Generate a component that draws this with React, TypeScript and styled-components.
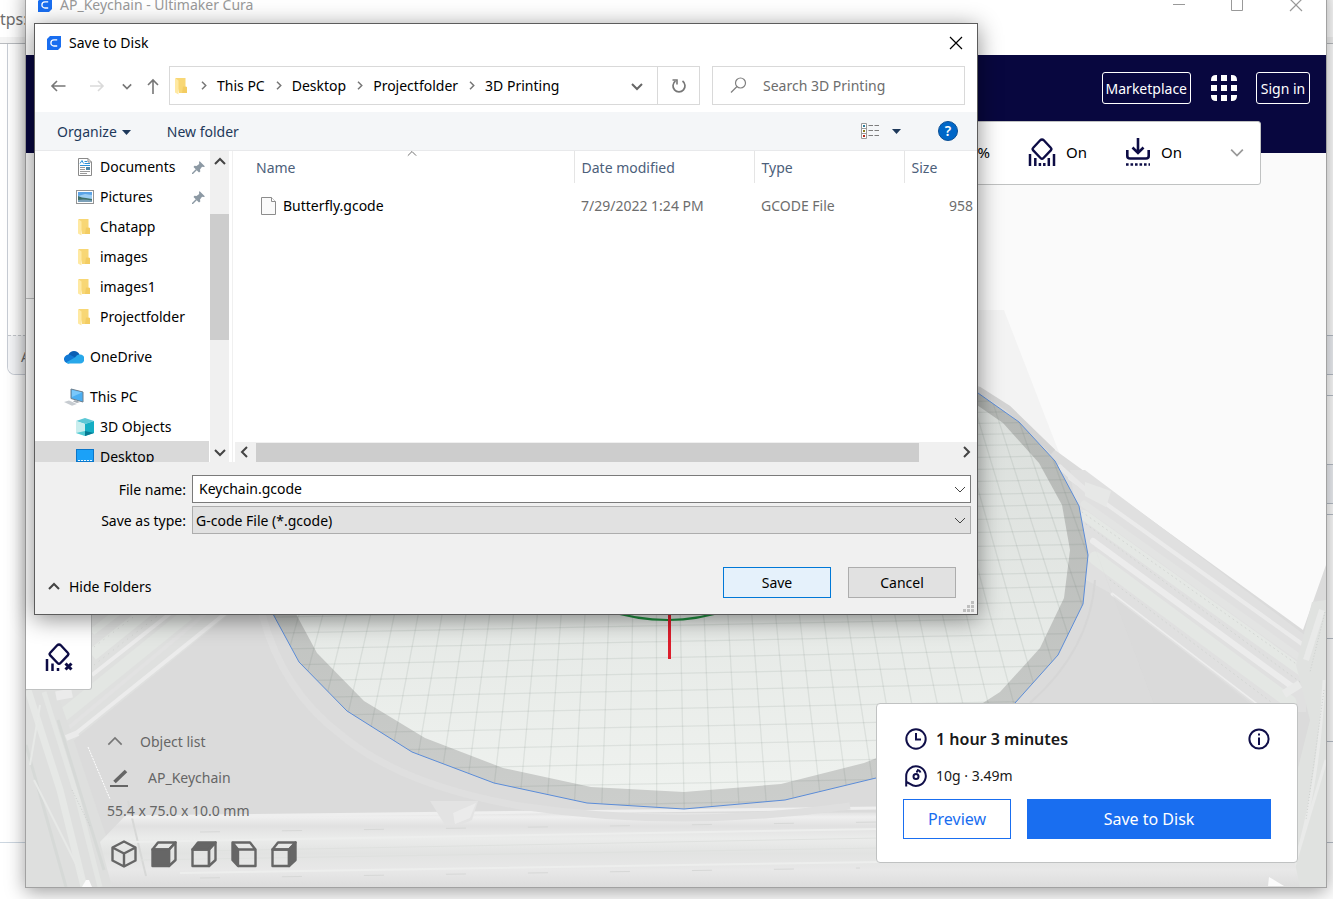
import React from "react";
import styled, { createGlobalStyle } from "styled-components";

const Global = createGlobalStyle`
  * { box-sizing: border-box; }
  html, body, #root { height: 100%; }
  body { margin: 0; overflow: hidden; background: #fff; font-family: "Noto Sans", "Open Sans", sans-serif; font-size: 14px; line-height: 20px; color: #000; }
  button, input, select { font: inherit; color: inherit; margin: 0; }
  button { background: none; border: 0; padding: 0; display: flex; align-items: center; justify-content: center; }
  svg { display: block; flex: none; }
`;

/* ---------- browser page behind the windows ---------- */

const Desktop = styled.main`
  position: relative;
  min-height: 100vh;
  overflow: hidden;
  background: #fff;
`;
const BrowserPage = styled.div`
  display: flex;
  flex-direction: column;
  min-height: 100vh;
  color: #6d6d6d;
`;
const AddressBar = styled.div`
  height: 44px;
  padding-top: 9px;
  border-bottom: 1px solid #b9bcc0;
  font-size: 16px;
  box-shadow: inset 0 -6px 0 #f4f4f4;
`;
const PageBody = styled.div`
  display: flex;
  align-items: flex-start;
  justify-content: space-between;
`;
const PostCard = styled.div`
  width: 300px;
  margin-left: 7px;
  border: 1px solid #c9ced6;
  border-top: 0;
  border-radius: 0 0 8px 8px;
`;
const PostBody = styled.div`
  height: 291px;
`;
const PostFooter = styled.div`
  height: 39px;
  padding: 11px 13px;
  border-top: 1px dashed #c4c7cc;
  background: #f5f6f8;
  border-radius: 0 0 8px 8px;
`;
const SideCells = styled.div`
  width: 60px;
`;
const SideCell = styled.div<{ $h: number; $tint?: boolean }>`
  height: ${(p) => p.$h}px;
  border-bottom: 1px solid #b8bfc8;
  background: ${(p) => (p.$tint ? "#f1f3f7" : "transparent")};
`;
const PageRule = styled.hr`
  width: 60px;
  margin: -1px 0 0;
  border: 0;
  border-top: 1px solid #ccd6e0;
`;

/* ---------- slicer window ---------- */

const CuraWindow = styled.section`
  position: absolute;
  top: -14px;
  right: 6px;
  bottom: 11px;
  left: 25px;
  display: flex;
  flex-direction: column;
  border: 1px solid #a2a2a2;
  background: #fff;
  box-shadow: 0 4px 18px rgba(0, 0, 0, 0.38);
`;
const CuraTitle = styled.header`
  display: flex;
  align-items: center;
  height: 36px;
  padding: 0 23px 0 12px;
  color: #999;
`;
const TitleText = styled.span`
  flex: 1;
  margin-left: 8px;
`;
const WindowButtons = styled.div`
  display: flex;
  gap: 46px;
`;
const MenuStrip = styled.div`
  height: 32px;
`;
const NavBar = styled.nav`
  display: flex;
  align-items: flex-start;
  justify-content: flex-end;
  height: 98px;
  padding: 17px 16px 0;
  background: #08073f;
  color: #fff;
`;
const NavButton = styled.button`
  min-width: 54px;
  height: 32px;
  padding: 1px 3px 0;
  border: 1px solid #fff;
  border-radius: 3px;
`;
const AppsButton = styled.button`
  height: 32px;
  margin: 0 19px 0 20px;
`;
const Stage = styled.div`
  position: relative;
  flex: 1;
  display: flex;
  flex-direction: column;
  background: #fafafa;
`;
const Scene = styled.svg`
  position: absolute;
  inset: 0;
  width: 100%;
  height: 100%;
`;
const SettingsPanel = styled.div`
  position: absolute;
  top: -32px;
  right: 65px;
  left: 560px;
  display: flex;
  align-items: center;
  justify-content: flex-end;
  height: 64px;
  padding: 0 16px 2px 0;
  border: 1px solid #c0c2c2;
  border-radius: 3px;
  background: #fff;
  font-size: 15px;
`;
const Setting = styled.span`
  display: flex;
  align-items: center;
  gap: 10px;
  margin-right: 38px;
  &:last-of-type { margin-right: 48px; }
`;
const ToolPanel = styled.aside`
  position: relative;
  display: flex;
  align-items: flex-end;
  width: 66px;
  min-height: 392px;
  margin-top: 145px;
  padding: 0 0 18px 19px;
  border: 1px solid #c0c2c2;
  border-left: 0;
  border-radius: 0 3px 3px 0;
  background: #fff;
`;
const StageFoot = styled.div`
  position: relative;
  display: flex;
  justify-content: space-between;
  align-items: flex-end;
  margin-top: auto;
  padding: 0 28px 19px 81px;
`;
const ObjectInfo = styled.div`
  display: flex;
  flex-direction: column;
  color: #666;
`;
const InfoRow = styled.div<{ $gap: number }>`
  display: flex;
  align-items: center;
  gap: ${(p) => p.$gap}px;
  height: 36px;
`;
const InfoText = styled.div`
  height: 30px;
  padding-top: 5px;
`;
const ViewButtons = styled.div`
  display: flex;
  gap: 14px;
  padding: 14px 0 0 4px;
`;
const ActionPanel = styled.section`
  display: flex;
  flex-direction: column;
  width: 422px;
  margin-bottom: 5px;
  padding: 21px 26px 23px;
  border: 1px solid #c0c2c2;
  border-radius: 4px;
  background: #fff;
  color: #191919;
`;
const ActionRow = styled.div`
  display: flex;
  align-items: center;
  height: 28px;
  gap: 9px;
  margin-bottom: 9px;
  padding: 0 1px 0 2px;
`;
const Duration = styled.strong`
  flex: 1;
  font-size: 16px;
  font-weight: 600;
`;
const ActionButtons = styled.div`
  display: grid;
  grid-template-columns: 108px 1fr;
  gap: 16px;
`;
const ActionButton = styled.button<{ $primary?: boolean }>`
  height: 40px;
  border: 1px solid #196ef0;
  background: ${(p) => (p.$primary ? "#196ef0" : "#fff")};
  color: ${(p) => (p.$primary ? "#fff" : "#196ef0")};
  font-size: 16px;
`;

/* ---------- save dialog ---------- */

const Dialog = styled.section`
  position: absolute;
  top: 23px;
  left: 34px;
  right: 355px;
  min-width: 720px;
  border: 1px solid #5c5c5c;
  background: #fff;
  box-shadow: 0 4px 22px rgba(0, 0, 0, 0.45);
`;
const DialogTitle = styled.header`
  display: flex;
  align-items: center;
  height: 38px;
  padding: 0 14px 0 12px;
`;
const Navigation = styled.div`
  display: flex;
  align-items: center;
  height: 50px;
  padding: 4px 12px 7px 15px;
`;
const Arrows = styled.div`
  display: grid;
  grid-template-columns: 39px 33px 23px 16px;
  align-items: center;
  justify-items: start;
  margin-right: 8px;
`;
const PathBox = styled.div`
  display: flex;
  align-items: center;
  flex: 1;
  height: 39px;
  border: 1px solid #d9d9d9;
  padding-left: 3px;
`;
const Crumbs = styled.ol`
  display: flex;
  flex: 1;
  margin: 0;
  padding: 0 0 0 8px;
  list-style: none;
`;
const Crumb = styled.li`
  display: flex;
  align-items: center;
  gap: 9px;
  margin-right: 9px;
`;
const RefreshButton = styled.button`
  align-self: stretch;
  width: 42px;
  margin-left: 14px;
  border-left: 1px solid #d9d9d9;
`;
const SearchBox = styled.label`
  display: flex;
  align-items: center;
  gap: 16px;
  width: 253px;
  height: 39px;
  margin-left: 12px;
  padding-left: 17px;
  border: 1px solid #d9d9d9;
`;
const SearchInput = styled.input`
  width: 180px;
  border: 0;
  padding: 0;
  outline: 0;
  background: none;
  &::placeholder { color: #6d6d6d; opacity: 1; }
`;
const Toolbar = styled.div`
  display: flex;
  align-items: center;
  height: 39px;
  padding: 0 19px 0 22px;
  border-bottom: 1px solid #e8e9eb;
  background: #f4f6f8;
  color: #1e395b;
`;
const ToolbarButton = styled.button<{ $view?: boolean }>`
  gap: ${(p) => (p.$view ? 13 : 5)}px;
  margin-right: ${(p) => (p.$view ? 37 : 36)}px;
  padding-top: ${(p) => (p.$view ? 0 : 2)}px;
`;
const Spacer = styled.div`
  flex: 1;
`;
const Browser = styled.div`
  display: flex;
  height: 311px;
`;
const Tree = styled.ul`
  width: 174px;
  margin: 0;
  padding: 0;
  overflow: hidden;
  list-style: none;
`;
const TreeItem = styled.li<{ $top?: boolean; $space?: boolean; $selected?: boolean }>`
  display: flex;
  align-items: center;
  height: 30px;
  margin-top: ${(p) => (p.$space ? 10 : 0)}px;
  padding: 2px 4px 0 ${(p) => (p.$top ? 29 : 41)}px;
  background: ${(p) => (p.$selected ? "#d9d9d9" : "transparent")};
`;
const TreeLabel = styled.span`
  flex: 1;
  margin-left: 6px;
`;
const VScroll = styled.div`
  display: flex;
  flex-direction: column;
  align-items: center;
  width: 19px;
  margin: 0 1px;
  padding: 5px 0 4px;
  background: #f0f0f0;
`;
const VThumb = styled.div`
  width: 19px;
  height: 126px;
  margin: 46px 0 auto;
  background: #cdcdcd;
`;
const FilePane = styled.div`
  display: flex;
  flex: 1;
  flex-direction: column;
  min-width: 0;
  margin-left: 2px;
  border-left: 1px solid #f0f0f0;
`;
const FileArea = styled.div`
  position: relative;
  flex: 1;
  padding-left: 2px;
`;
const SortMark = styled.span`
  position: absolute;
  top: -2px;
  left: 174px;
`;
const FileTable = styled.table`
  width: 100%;
  table-layout: fixed;
  border-collapse: collapse;
`;
const HeadCell = styled.th<{ $w?: number }>`
  width: ${(p) => (p.$w ? p.$w + "px" : "auto")};
  height: 32px;
  padding: 2px 0 0 7px;
  border-right: 1px solid #e5e5e5;
  color: #4c607a;
  font-weight: 400;
  text-align: left;
  &:first-child { padding-left: 21px; }
  &:last-child { border-right: 0; }
`;
const Cell = styled.td`
  height: 44px;
  padding: 2px 0 0 7px;
  color: #6d6d6d;
  white-space: nowrap;
  &:first-child { padding-left: 26px; color: #000; }
  &:last-child { padding-right: 4px; text-align: right; }
`;
const FileName = styled.span`
  display: flex;
  align-items: center;
  gap: 7px;
`;
const HScroll = styled.div`
  display: flex;
  align-items: center;
  height: 20px;
  margin-left: 2px;
  padding: 0 5px 0 4px;
  background: #f0f0f0;
`;
const HThumb = styled.div`
  flex: 1;
  height: 19px;
  margin: 0 41px 0 5px;
  background: #cdcdcd;
`;
const Footer = styled.div`
  padding: 13px 6px 0 13px;
  background: #f0f0f0;
`;
const Field = styled.div`
  display: grid;
  grid-template-columns: 138px 1fr;
  gap: 6px;
  align-items: center;
  margin-bottom: 3px;
`;
const FieldLabel = styled.label`
  padding-top: 2px;
  text-align: right;
`;
const Combo = styled.div<{ $muted?: boolean }>`
  display: flex;
  align-items: center;
  height: 28px;
  padding: 0 4px 0 ${(p) => (p.$muted ? 3 : 6)}px;
  border: 1px solid ${(p) => (p.$muted ? "#adadad" : "#7a7a7a")};
  background: ${(p) => (p.$muted ? "#e1e1e1" : "#fff")};
`;
const ComboInput = styled.input`
  flex: 1;
  padding: 0;
  border: 0;
  outline: 0;
  background: none;
`;
const ComboSelect = styled.select`
  flex: 1;
  padding: 1px 0 0;
  border: 0;
  outline: 0;
  appearance: none;
  background: none;
`;
const FooterActions = styled.div`
  display: flex;
  align-items: center;
  gap: 17px;
  padding: 30px 15px 3px 0;
`;
const HideFolders = styled.button`
  gap: 9px;
  margin: 8px auto 0 0;
`;
const DialogButton = styled.button<{ $default?: boolean }>`
  width: 108px;
  height: 31px;
  border: 1px solid ${(p) => (p.$default ? "#0078d7" : "#adadad")};
  background: ${(p) => (p.$default ? "#e5f1fb" : "#e1e1e1")};
`;
const GripRow = styled.div`
  display: flex;
  justify-content: flex-end;
  height: 13px;
  margin-right: -3px;
`;

/* ---------- icons ---------- */

const Logo = () => (
  <svg width="14" height="14" viewBox="0 0 14 14">
    <path d="M3 0H14V11L11 14H0V3Z" fill="#196ef0" />
    <path d="M10.2 3.8H7A3.100 3.100 0 0 0 7 10H10.2" fill="none" stroke="#fff" strokeWidth="1.300" />
  </svg>
);

const chevrons = {
  up: "M1 8L6 3L11 8",
  down: "M1 4L6 9L11 4",
  left: "M8 1L3 6L8 11",
  right: "M4 1L9 6L4 11",
};
const Chevron = ({ dir, size = 12, color = "#444", w = 1.5 }: { dir: keyof typeof chevrons; size?: number; color?: string; w?: number }) => (
  <svg width={size} height={size} viewBox="0 0 12 12">
    <path d={chevrons[dir]} fill="none" stroke={color} strokeWidth={w} />
  </svg>
);
const Cross = ({ color }: { color: string }) => (
  <svg width="14" height="14" viewBox="0 0 14 14"><path d="M1 1L13 13M13 1L1 13" stroke={color} strokeWidth="1.2" /></svg>
);
const NavArrow = ({ kind }: { kind: "back" | "forward" | "up" }) => (
  <svg width="16" height="16" viewBox="0 0 16 16">
    <path
      d={kind === "back" ? "M7 3L2 8L7 13M2 8H15.500" : kind === "forward" ? "M9 3L14 8L9 13M14 8H1" : "M3 7L8 2L13 7M8 2V16"}
      fill="none"
      stroke={kind === "forward" ? "#dadada" : "#777"}
      strokeWidth="1.6"
    />
  </svg>
);
const Caret = () => (
  <svg width="9" height="5" viewBox="0 0 9 5"><path d="M0 0H9L4.500 5Z" fill="#1e395b" /></svg>
);
const Folder = () => (
  <svg width="18" height="18" viewBox="0 0 18 18">
    <path d="M2.500 1H12.500V9.500L14 10V16H6Z" fill="#f8d775" />
    <path d="M10 9.500L14 10V16H9Z" fill="#f3cc62" />
    <path d="M2 1L5.500 3.500V17.500L2 15.500Z" fill="#ffe9a2" />
  </svg>
);
const DocumentIcon = () => (
  <svg width="18" height="18" viewBox="0 0 18 18">
    <path d="M2.500 .5H12L15.500 4V17.500H2.500Z" fill="#fff" stroke="#8a8a8a" />
    <path d="M12 .5V4H15.500" fill="none" stroke="#8a8a8a" />
    <path d="M4 5.500L6 2.500L7.500 5.500M8.500 3.500H11M8.500 5.500H14M4 7.500H14" fill="none" stroke="#2a8fd8" />
    <path d="M4 9.500H9M4 11.500H9M4 13.500H14M4 15.500H11" stroke="#9a9a9a" />
    <rect x="10" y="9" width="4" height="3" fill="#4d86a8" />
  </svg>
);
const PictureIcon = () => (
  <svg width="18" height="14" viewBox="0 0 18 14">
    <rect x=".5" y=".5" width="17" height="13" fill="#fff" stroke="#949494" />
    <rect x="2" y="2" width="14" height="10" fill="#9ccdf3" />
    <path d="M2 2H16V5L9 4L2 6Z" fill="#5ba3e6" />
    <path d="M2 6Q6 8 10 8L16 9V12H2Z" fill="#3f6f68" />
    <path d="M2 10Q8 9 16 10.500V12H2Z" fill="#7ba0b8" />
  </svg>
);
const Cloud = () => (
  <svg width="20" height="14" viewBox="0 0 20 14">
    <path d="M4.500 4.500A6 6 0 0 1 15.500 4.500L12 9L4 8Z" fill="#0a5fb4" />
    <path d="M4 13.500A4.500 4.500 0 1 1 6.500 5L12 8L5 13.500Z" fill="#1178d4" />
    <path d="M11 7.500Q13 4 16 4.500A4.500 4.500 0 0 1 16 13.500H4L2 12.500Z" fill="#28a8ea" />
  </svg>
);
const Computer = () => (
  <svg width="20" height="18" viewBox="0 0 20 18">
    <path d="M7 1L19 4V14L7 10.500Z" fill="#4aaef2" stroke="#6e7f8c" />
    <path d="M8 2L18 4.500L8 9Z" fill="#79c8fb" />
    <path d="M11 12L16 14L13 15L9 13.500Z" fill="#a9afb5" />
    <path d="M0 14L5 12.500L13 16L8 17.800Z" fill="#c7ccd1" />
  </svg>
);
const Cube3D = () => (
  <svg width="18" height="18" viewBox="0 0 18 18">
    <path d="M0 3L9 0L18 3L9 6Z" fill="#5cc8d6" />
    <path d="M0 3L9 6V18L0 15Z" fill="#c9eeee" />
    <path d="M18 3L9 6V18L18 15Z" fill="#14aec4" />
    <path d="M9 13L18 15L9 18Z" fill="#067a92" />
    <path d="M9 13L0 15L9 18Z" fill="#50cbd4" />
  </svg>
);
const Monitor = () => (
  <svg width="18" height="16" viewBox="0 0 18 16">
    <rect x=".5" y=".5" width="17" height="12" fill="#1ba1f8" stroke="#0b76c9" />
    <path d="M2 11.500H16" stroke="#e6f5ff" strokeDasharray="2 1" />
    <path d="M5 15H13" stroke="#0b76c9" strokeWidth="2" />
  </svg>
);
const Pin = () => (
  <svg width="13" height="13" viewBox="0 0 13 13">
    <path d="M7.500 0L13 5.500L11.500 6L10 5.800L8 8.500L8.300 10.500L7 11.500L1.500 6L2.500 4.800L4.500 5L7.200 3L7 1.500Z" fill="#8c99a4" />
    <path d="M4.500 8.500L0 13" stroke="#8c99a4" strokeWidth="1.4" />
  </svg>
);
const BlankFile = () => (
  <svg width="15" height="18" viewBox="0 0 15 18">
    <path d="M.5 .5H10.500L14.500 4.500V17.500H.5Z" fill="#fafafa" stroke="#8c8c8c" />
    <path d="M10.500 .5V4.500H14.500" fill="#fff" stroke="#8c8c8c" />
  </svg>
);
const Refresh = () => (
  <svg width="16" height="16" viewBox="0 0 16 16">
    <path d="M11.500 3A6 6 0 1 1 4.500 3" fill="none" stroke="#777" strokeWidth="1.700" />
    <path d="M1.500 2H6V6.500" fill="none" stroke="#777" strokeWidth="1.600" />
  </svg>
);
const Magnifier = () => (
  <svg width="17" height="17" viewBox="0 0 17 17">
    <circle cx="10.500" cy="6" r="5" fill="none" stroke="#808080" strokeWidth="1.200" />
    <path d="M7 9.500L1 15.500" stroke="#808080" strokeWidth="1.200" />
  </svg>
);
const ListIcon = () => (
  <svg width="18" height="16" viewBox="0 0 18 16">
    <path d="M.5 .5H5.500V15.500H.5ZM.5 5.500H5.500M.5 10.500H5.500" fill="#fff" stroke="#9a9a9a" />
    <path d="M2 3H4" stroke="#2f7d9a" strokeWidth="2" />
    <path d="M2 8H4" stroke="#8a7a1c" strokeWidth="2" />
    <path d="M2 13H4" stroke="#b32a1c" strokeWidth="2" />
    <path d="M7.500 2.500H12M13.500 2.500H18M7.500 7.500H12M13.500 7.500H18M7.500 12.500H12M13.500 12.500H18" stroke="#7d7d7d" />
  </svg>
);
const Help = styled.button`
  width: 20px;
  height: 20px;
  border: 1px solid #0b4f94;
  border-radius: 50%;
  background: #0067c8;
  color: #fff;
  font-weight: 600;
`;
const Grip = () => (
  <svg width="11" height="11" viewBox="0 0 11 11" fill="#bfbfbf">
    {[[8, 0], [4, 4], [8, 4], [0, 8], [4, 8], [8, 8]].map(([x, y]) => <rect key={`${x}-${y}`} x={x} y={y} width="3" height="3" />)}
  </svg>
);
const Apps = () => (
  <svg width="26" height="26" viewBox="0 0 26 26" fill="#fff">
    <path d="M6 0V6H0V5Q0 0 5 0ZM10 0H16V6H10ZM20 0H21Q26 0 26 5V6H20ZM0 10H6V16H0ZM10 10H16V16H10ZM20 10H26V16H20ZM0 20H6V26H5Q0 26 0 21ZM10 20H16V26H10ZM20 20H26V21Q26 26 21 26H20Z" />
  </svg>
);
const SupportIcon = ({ blocked }: { blocked?: boolean }) => (
  <svg width="28" height="28" viewBox="0 0 28 28" fill="none" stroke="#0d0c45">
    <path d="M14 1.500Q15 1.500 15.800 2.300L23 10Q24 11 23 12.200L15.500 20Q14 21.500 12.500 20L5 12.200Q4 11 5 10L12.200 2.300Q13 1.500 14 1.500Z" strokeWidth="2.400" />
    <path d={blocked ? "M2 16V28M7.500 20.500V28M13 25V28" : "M2 16V28M7.300 20V28M11.900 25V28M16.300 25V28M20.800 20V28M26 16V28"} strokeWidth="2.500" />
    {blocked && <path d="M20.500 20.500L26.500 26.500M26.500 20.500L20.500 26.500" strokeWidth="3" />}
  </svg>
);
const AdhesionIcon = () => (
  <svg width="26" height="28" viewBox="0 0 26 28" fill="none" stroke="#0d0c45" strokeWidth="2.600">
    <path d="M13 0V14.500M7.500 9.500L13 15L18.500 9.500" />
    <path d="M2.300 12V18Q2.300 20.500 5 20.500H21Q23.700 20.500 23.700 18V12" />
    <path d="M1 26.500H25" strokeDasharray="2.600 1.900" />
  </svg>
);
const Clock = () => (
  <svg width="22" height="22" viewBox="0 0 22 22" fill="none" stroke="#100f49" strokeWidth="2">
    <circle cx="11" cy="11" r="9.700" />
    <path d="M11 5V11.500H16" />
  </svg>
);
const Spool = () => (
  <svg width="22" height="22" viewBox="0 0 22 22" fill="none" stroke="#100f49" strokeWidth="2">
    <path d="M1.200 21.500V11A9.800 9.800 0 1 1 5.500 19.200L1.500 17" />
    <circle cx="11" cy="11.500" r="2.500" />
    <path d="M11 6.500H13M12 5Q14.500 5 15.500 7.500" />
  </svg>
);
const Info = () => (
  <svg width="22" height="22" viewBox="0 0 22 22" fill="none" stroke="#100f49" strokeWidth="2">
    <circle cx="11" cy="11" r="9.600" />
    <path d="M11 9.500V17M11 5.500V7.500" />
  </svg>
);
const Pencil = () => (
  <svg width="21" height="18" viewBox="0 0 21 18" fill="none" stroke="#666">
    <path d="M7.500 13L19 2" strokeWidth="3.600" />
    <path d="M3 17H21" strokeWidth="2" />
  </svg>
);
type Face = "iso" | "front" | "top" | "left" | "right";
const ViewCube = ({ face }: { face: Face }) => (
  <svg width="26" height="28" viewBox="0 0 26 28" fill="none" stroke="#666" strokeWidth="2.400" strokeLinejoin="round">
    {face === "iso" ? (
      <path d="M13 1.500L24.500 7.500V20.500L13 26.500L1.500 20.500V7.500ZM1.500 7.500L13 13.500L24.500 7.500M13 13.500V26" />
    ) : face === "left" ? (
      <>
        <path d="M1.500 2.500L7 9.500V26L1.500 20Z" fill="#666" />
        <path d="M1.500 2.500H19L24.500 9.500V26H7M7 9.500H24.500" />
      </>
    ) : (
      <>
        <path d="M1.500 9.500L7 2.500H24.500L18 9.500Z" fill={face === "top" ? "#666" : "none"} />
        <path d="M1.500 9.500H18V26H1.500Z" fill={face === "front" ? "#666" : "none"} />
        <path d="M24.500 2.500V20L18 26V9.500Z" fill={face === "right" ? "#666" : "none"} />
      </>
    )}
  </svg>
);

/* ---------- 3D scene ---------- */

const rimOuter = "978,393 1019,422 1055,461 1079,506 1088,555 1083,604 1058,655 1015,703 955,748 876,778 785,800 684,809 587,803 494,783 412,752 347,711 299,662 273,614 260,555 300,450 450,360 700,340";
const rimInner = "977,405 1003,423 1039,463 1062,505 1070,550 1064,598 1040,648 1000,692 930,737 864,763 781,784 684,792 591,787 503,768 425,738 364,701 317,653 296,614 290,555 330,460 460,375 700,355";
const rows = [401, 412, 423, 434, 445, 457, 469, 481, 494, 506, 519, 532, 546, 560, 574, 588, 603, 619, 635, 651, 667, 684, 702, 720, 738, 757, 777, 797];
const columns = Array.from({ length: 37 }, (_, i) => i - 18);
const gridX = (k: number, y: number) => 681 + 0.02 * (y - 650) + k * (24.5 + 0.019 * (y - 650));

const BuildScene = () => (
  <Scene viewBox="26 153 1300 734" preserveAspectRatio="xMidYMid slice" aria-hidden="true">
    <defs>
      <linearGradient id="plate" x1="0" y1="0" x2="0" y2="1">
        <stop offset="0.1" stopColor="#dadedb" />
        <stop offset="1" stopColor="#eff2ef" />
      </linearGradient>
      <linearGradient id="rim" x1="0" y1="0" x2="0" y2="1">
        <stop offset="0.1" stopColor="#b4b7b4" />
        <stop offset="1" stopColor="#cccecc" />
      </linearGradient>
      <linearGradient id="beam" x1="0" y1="0" x2="0" y2="1">
        <stop offset="0" stopColor="#dedede" />
        <stop offset="0.08" stopColor="#efefef" />
        <stop offset="0.2" stopColor="#e1e1e1" />
        <stop offset="0.36" stopColor="#ebeceb" />
        <stop offset="0.55" stopColor="#e2e3e2" />
        <stop offset="0.78" stopColor="#e8e8e8" />
        <stop offset="1" stopColor="#dddddd" />
      </linearGradient>
      <clipPath id="bed"><polygon points={rimOuter} /></clipPath>
    </defs>
    <polygon points="700,310 1004,310 1060,455 978,455" fill="#f3f3f3" />
    <polygon points="26,300 900,340 978,386 1009,407 1055,450 1303,630 1326,565 1326,887 26,887" fill="#dbdbdb" />
    <polygon points="1070,470 1085,470 1306,636 1306,712 1260,712 1112,594 1086,580" fill="#e0e0e0" />
    <g fill="none" strokeLinecap="round">
      <path d="M1070 478L1302 644" stroke="#ebebeb" strokeWidth="4" />
      <path d="M1084 504L1303 660" stroke="#e3e4e3" strokeWidth="7" />
      <path d="M1084 515L1303 672" stroke="#e5e8e5" strokeWidth="10" />
      <path d="M1093 541L1294 688" stroke="#ececec" strokeWidth="6" />
      <path d="M1095 558L1290 702" stroke="#e4e7e4" strokeWidth="13" />
      <path d="M1112 594L1260 707" stroke="#eeeeee" strokeWidth="3" />
      <path d="M1082 512L1302 668M1086 524L1300 682M1110 580L1275 705" stroke="#d3d6d3" strokeDasharray="1 4" />
      <path d="M1060 467L1090 494" stroke="#e8e8e8" strokeWidth="5" />
    </g>
    <polygon points="1085,482 1111,491 1106,507 1085,496" fill="#e7e8e7" />
    <polygon points="1090,535 1154,704 1256,704 1112,594" fill="#d8d8d8" opacity="0.6" />
    <polygon points="1326,600 1312,602 1296,665 1310,720 1290,800 1284,887 1326,887" fill="#e0e2e0" />
    <g fill="none" stroke="#e9eae9">
      <path d="M1322 610L1306 660" strokeWidth="6" />
      <path d="M1324 680Q1318 800 1288 884M1326 760L1290 880" strokeWidth="3" />
      <path d="M1284 694L1300 684" strokeWidth="8" />
    </g>
    <path d="M1325 612L1310 672M1324 690L1306 820" fill="none" stroke="#cdd0ce" strokeDasharray="1 2" />

    <polygon points="92,612 232,612 74,740 60,760 26,780 26,690 92,690" fill="#dfe0df" />
    <g fill="none">
      <path d="M92 632L118 612" stroke="#e4e7e4" strokeWidth="7" />
      <path d="M92 655L148 610" stroke="#e5e8e5" strokeWidth="12" />
      <path d="M92 675L172 612" stroke="#ececec" strokeWidth="4" />
      <path d="M62 716L188 614" stroke="#e3e6e3" strokeWidth="13" />
      <path d="M60 735L205 614" stroke="#e2e2e2" strokeWidth="4" />
      <path d="M70 738L227 612" stroke="#ececec" strokeWidth="4" />
      <path d="M94 647L140 612M94 665L160 614" stroke="#d0d3d0" strokeDasharray="1 5" />
    </g>
    <polygon points="26,690 56,690 72,735 104,830 126,887 26,887" fill="#dedfde" />
    <g fill="none">
      <path d="M28 690L60 790L84 887" stroke="#e6e8e6" strokeWidth="7" />
      <path d="M44 692L78 800L100 887" stroke="#e4e6e4" strokeWidth="5" />
      <path d="M26 745L66 887M58 720L104 870" stroke="#d6d9d7" strokeWidth="3" />
      <path d="M56 696L72 693" stroke="#ebebeb" strokeWidth="9" />
      <path d="M66 738L78 733" stroke="#ebebeb" strokeWidth="6" />
      <path d="M30 765L40 705M34 780L84 880" stroke="#e7e9e7" strokeWidth="2" />
      <path d="M72 790L90 826" stroke="#c9cccb" strokeDasharray="1 2" />
      <path d="M88 747L110 799" stroke="#fff" strokeDasharray="2 1" />
    </g>
    <polygon points="112,887 100,842 126,815 1284,811 1300,887" fill="url(#beam)" />
    <path d="M128 801L146 876" stroke="#d7d8d7" strokeWidth="2" />
    <g fill="none" strokeWidth="1">
      <path d="M130 817L880 808" stroke="#efefef" strokeWidth="3" />
      <path d="M130 842L880 829M180 873L880 862" stroke="#edeeed" strokeWidth="2" />
      <path d="M200 832L880 822M200 878L860 868" stroke="#d7d8d7" strokeDasharray="20 62" />
      <path d="M200 851L880 838M140 860L880 848" stroke="#dfe1df" />
    </g>
    <polygon points="430,801 478,801 472,820 460,825 445,825" fill="#e3e3e3" />
    <polygon points="453,813 476,803 470,818 455,824" fill="#ebebeb" />
    <polygon points="1269,877 1284,886 1268,886" fill="#fbfbfb" />
    <polygon points="86,880 89,880 92,887 82,887" fill="#fbfbfb" />
    <path d="M262 614Q282 690 340 734Q400 785 520 806Q680 830 850 806" fill="none" stroke="#dfdfdf" strokeWidth="7" />
    <path d="M1095 580Q1090 650 1030 703" fill="none" stroke="#d6d6d6" strokeWidth="2" />
    <path d="M978 389L1008 408L1053 452" fill="none" stroke="#d3d3d3" strokeWidth="6" />

    <polygon points={rimOuter} fill="url(#rim)" />
    <polygon points={rimInner} fill="url(#plate)" />
    <g clipPath="url(#bed)" stroke="#5f6b62" strokeOpacity="0.11" strokeWidth="1.3">
      {rows.map((y) => <line key={y} x1={230} x2={1100} y1={y + 15} y2={y - 2} />)}
      {columns.map((k) => <line key={k} x1={gridX(k, 340)} y1={340} x2={gridX(k, 812)} y2={812} />)}
    </g>
    <polygon points={rimOuter} fill="none" stroke="#5b8cd8" strokeWidth="1" />
    <path d="M606 610Q636 620 668 620Q698 620 728 610" fill="none" stroke="#1f8f3f" strokeWidth="2" />
    <path d="M669.500 600V659" stroke="#dc1e2c" strokeWidth="3" />
  </Scene>
);

/* ---------- data ---------- */

const tree: { label: string; icon: React.ReactNode; pinned?: boolean; top?: boolean; space?: boolean; selected?: boolean }[] = [
  { label: "Documents", icon: <DocumentIcon />, pinned: true },
  { label: "Pictures", icon: <PictureIcon />, pinned: true },
  { label: "Chatapp", icon: <Folder /> },
  { label: "images", icon: <Folder /> },
  { label: "images1", icon: <Folder /> },
  { label: "Projectfolder", icon: <Folder /> },
  { label: "OneDrive", icon: <Cloud />, top: true, space: true },
  { label: "This PC", icon: <Computer />, top: true, space: true },
  { label: "3D Objects", icon: <Cube3D /> },
  { label: "Desktop", icon: <Monitor />, selected: true },
];
const path = ["This PC", "Desktop", "Projectfolder", "3D Printing"];
const faces: Face[] = ["iso", "front", "top", "left", "right"];
const cells = [{ h: 292 }, { h: 39, t: true }, { h: 21 }, { h: 69 }, { h: 39, t: true }, { h: 11 }, { h: 124 }, { h: 103 }, { h: 101 }];

const SaveDialog = () => (
  <Dialog role="dialog" aria-label="Save to Disk">
    <DialogTitle>
      <Logo />
      <TitleText>Save to Disk</TitleText>
      <button aria-label="Close"><Cross color="#000" /></button>
    </DialogTitle>
    <Navigation>
      <Arrows>
        <button aria-label="Back"><NavArrow kind="back" /></button>
        <button aria-label="Forward"><NavArrow kind="forward" /></button>
        <button aria-label="Recent locations"><Chevron dir="down" size={10} color="#777" w={2} /></button>
        <button aria-label="Up"><NavArrow kind="up" /></button>
      </Arrows>
      <PathBox>
        <Folder />
        <Crumbs>
          {path.map((name) => (
            <Crumb key={name}><Chevron dir="right" size={9} color="#777" w={2} />{name}</Crumb>
          ))}
        </Crumbs>
        <button aria-label="Previous locations"><Chevron dir="down" color="#666" w={2} /></button>
        <RefreshButton aria-label="Refresh"><Refresh /></RefreshButton>
      </PathBox>
      <SearchBox>
        <Magnifier />
        <SearchInput type="text" placeholder="Search 3D Printing" aria-label="Search 3D Printing" />
      </SearchBox>
    </Navigation>
    <Toolbar>
      <ToolbarButton>Organize <Caret /></ToolbarButton>
      <ToolbarButton>New folder</ToolbarButton>
      <Spacer />
      <ToolbarButton $view aria-label="Change view"><ListIcon /><Caret /></ToolbarButton>
      <Help aria-label="Help">?</Help>
    </Toolbar>
    <Browser>
      <Tree>
        {tree.map((item) => (
          <TreeItem key={item.label} $top={item.top} $space={item.space} $selected={item.selected}>
            {item.icon}
            <TreeLabel>{item.label}</TreeLabel>
            {item.pinned && <Pin />}
          </TreeItem>
        ))}
      </Tree>
      <VScroll>
        <Chevron dir="up" w={2} />
        <VThumb />
        <Chevron dir="down" w={2} />
      </VScroll>
      <FilePane>
        <FileArea>
          <SortMark><Chevron dir="up" size={10} color="#555" w={1} /></SortMark>
          <FileTable>
            <thead>
              <tr>
                <HeadCell>Name</HeadCell>
                <HeadCell $w={180}>Date modified</HeadCell>
                <HeadCell $w={150}>Type</HeadCell>
                <HeadCell $w={73}>Size</HeadCell>
              </tr>
            </thead>
            <tbody>
              <tr>
                <Cell><FileName><BlankFile />Butterfly.gcode</FileName></Cell>
                <Cell>7/29/2022 1:24 PM</Cell>
                <Cell>GCODE File</Cell>
                <Cell>958</Cell>
              </tr>
            </tbody>
          </FileTable>
        </FileArea>
        <HScroll>
          <Chevron dir="left" w={2} />
          <HThumb />
          <Chevron dir="right" w={2} />
        </HScroll>
      </FilePane>
    </Browser>
    <Footer>
      <Field>
        <FieldLabel htmlFor="file-name">File name:</FieldLabel>
        <Combo>
          <ComboInput id="file-name" type="text" defaultValue="Keychain.gcode" />
          <Chevron dir="down" w={1} />
        </Combo>
      </Field>
      <Field>
        <FieldLabel htmlFor="file-type">Save as type:</FieldLabel>
        <Combo $muted>
          <ComboSelect id="file-type"><option>G-code File (*.gcode)</option></ComboSelect>
          <Chevron dir="down" w={1} />
        </Combo>
      </Field>
      <FooterActions>
        <HideFolders><Chevron dir="up" w={2} />Hide Folders</HideFolders>
        <DialogButton $default>Save</DialogButton>
        <DialogButton>Cancel</DialogButton>
      </FooterActions>
      <GripRow><Grip /></GripRow>
    </Footer>
  </Dialog>
);

const App = () => (
  <Desktop>
    <Global />
    <BrowserPage>
      <AddressBar>tps:/</AddressBar>
      <PageBody>
        <PostCard>
          <PostBody />
          <PostFooter>A</PostFooter>
        </PostCard>
        <SideCells>
          {cells.map((c, i) => <SideCell key={i} $h={c.h} $tint={c.t} />)}
        </SideCells>
      </PageBody>
      <PageRule />
    </BrowserPage>
    <CuraWindow>
      <CuraTitle>
        <Logo />
        <TitleText>AP_Keychain - Ultimaker Cura</TitleText>
        <WindowButtons>
          <button aria-label="Minimize"><svg width="12" height="14" viewBox="0 0 12 14"><path d="M0 6.500H12" stroke="#999" /></svg></button>
          <button aria-label="Maximize"><svg width="12" height="14" viewBox="0 0 12 14"><path d="M.5 1.500H11.500V12.500H.5Z" fill="none" stroke="#999" /></svg></button>
          <button aria-label="Close window"><Cross color="#999" /></button>
        </WindowButtons>
      </CuraTitle>
      <MenuStrip />
      <NavBar>
        <NavButton>Marketplace</NavButton>
        <AppsButton aria-label="Applications"><Apps /></AppsButton>
        <NavButton>Sign in</NavButton>
      </NavBar>
      <Stage>
        <BuildScene />
        <SettingsPanel>
          <Setting>%</Setting>
          <Setting><SupportIcon />On</Setting>
          <Setting><AdhesionIcon />On</Setting>
          <button aria-label="Show settings"><Chevron dir="down" size={14} color="#999" /></button>
        </SettingsPanel>
        <ToolPanel>
          <button aria-label="Support blocker"><SupportIcon blocked /></button>
        </ToolPanel>
        <StageFoot>
          <ObjectInfo>
            <InfoRow $gap={17}><Chevron dir="up" size={16} color="#777" w={1.2} />Object list</InfoRow>
            <InfoRow $gap={20}><Pencil />AP_Keychain</InfoRow>
            <InfoText>55.4 x 75.0 x 10.0 mm</InfoText>
            <ViewButtons>
              {faces.map((f) => <button key={f} aria-label={`${f} view`}><ViewCube face={f} /></button>)}
            </ViewButtons>
          </ObjectInfo>
          <ActionPanel>
            <ActionRow><Clock /><Duration>1 hour 3 minutes</Duration><button aria-label="Print details"><Info /></button></ActionRow>
            <ActionRow><Spool />10g · 3.49m</ActionRow>
            <ActionButtons>
              <ActionButton>Preview</ActionButton>
              <ActionButton $primary>Save to Disk</ActionButton>
            </ActionButtons>
          </ActionPanel>
        </StageFoot>
      </Stage>
    </CuraWindow>
    <SaveDialog />
  </Desktop>
);

export default App;
